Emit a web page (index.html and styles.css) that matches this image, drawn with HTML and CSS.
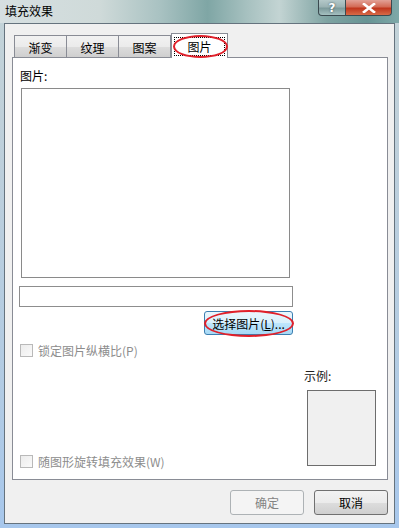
FILE: index.html
```html
<!DOCTYPE html>
<html lang="zh">
<head>
<meta charset="utf-8">
<title>填充效果</title>
<link rel="stylesheet" href="styles.css">
</head>
<body>
<div class="window">
  <div class="titlebar">
    <span class="title">填充效果</span>
    <div class="caption-btns">
      <span class="cap-btn help">?</span>
      <span class="cap-btn close">
        <svg width="14" height="10" viewBox="0 0 14 10"><path d="M2 1 L12 9 M12 1 L2 9" stroke="#fff" stroke-width="2.6" stroke-linecap="square"/></svg>
      </span>
    </div>
  </div>
  <div class="client">
    <div class="tabs">
      <div class="tab">渐变</div>
      <div class="tab">纹理</div>
      <div class="tab">图案</div>
      <div class="tab active"><span class="focus">图片</span><span class="ring ring-tab"></span></div>
    </div>
    <div class="panel">
      <div class="label">图片:</div>
      <div class="picture"></div>
      <div class="textbox"></div>
      <div class="btn-row">
        <div class="btn hot">选择图片(<u>L</u>)...<span class="ring ring-btn"></span></div>
      </div>
      <div class="lower">
        <div class="checks">
          <div class="check"><span class="box"></span>锁定图片纵横比(P)</div>
          <div class="check"><span class="box"></span>随图形旋转填充效果(W)</div>
        </div>
        <div class="sample">
          <div class="sample-label">示例:</div>
          <div class="sample-box"></div>
        </div>
      </div>
    </div>
    <div class="footer">
      <div class="btn dlg disabled">确定</div>
      <div class="btn dlg">取消</div>
    </div>
  </div>
</div>
</body>
</html>
```

FILE: styles.css
```css
* { box-sizing: border-box; }
html, body { margin: 0; padding: 0; }
body {
  width: 399px;
  height: 528px;
  overflow: hidden;
  font-family: "Noto Sans CJK SC", "Noto Sans", sans-serif;
  font-size: 12px;
  color: #000;
}
.window {
  width: 399px;
  height: 528px;
  display: flex;
  flex-direction: column;
  background: linear-gradient(180deg, #c3d3d8 0px, #bfd0da 120px, #b1cbe4 400px, #a7c7ec 528px);
}
.titlebar {
  height: 23px;
  display: flex;
  justify-content: space-between;
  align-items: flex-start;
  background: linear-gradient(90deg, #d6dfe1 0%, #cfdad9 25%, #a9c2c2 40%, #7fa6a5 52%, #a7c1c0 62%, #c3d4d3 70%, #7ea3a2 82%, #679494 92%, #7ea8a8 100%);
}
.title {
  padding: 3px 0 0 5px;
  line-height: 15px;
  color: #000;
}
.caption-btns {
  display: flex;
  margin-right: 7px;
}
.cap-btn {
  height: 16px;
  display: flex;
  align-items: center;
  justify-content: center;
  border: 1px solid #3b4a50;
  border-top: none;
  color: #fff;
  font-family: "DejaVu Sans", sans-serif;
  font-weight: bold;
  font-size: 12px;
}
.help {
  width: 28px;
  border-radius: 0 0 0 4px;
  background: linear-gradient(180deg, #b4c8c9 0%, #9bb3b4 45%, #7c9a9b 55%, #a5c0c0 100%);
  text-shadow: 0 0 2px #2c3e44;
}
.close {
  width: 46px;
  border-left: none;
  border-radius: 0 0 4px 0;
  background: linear-gradient(180deg, #e2a196 0%, #d36b56 45%, #c0361d 55%, #d76b48 100%);
}
.client {
  flex: 1;
  margin: 0 4px 4px 4px;
  border: 1px solid #65737e;
  background: #f0f0f0;
  display: flex;
  flex-direction: column;
  padding: 0 6px 0 7px;
}
.tabs {
  margin-top: 9px;
  height: 24px;
  display: flex;
  align-items: flex-end;
  padding-left: 2px;
  position: relative;
  z-index: 2;
}
.tab {
  width: 53px;
  height: 22px;
  margin-right: -1px;
  border: 1px solid #898c95;
  border-bottom: none;
  background: linear-gradient(180deg, #f2f2f2 0%, #ebebeb 50%, #dddddd 51%, #cfcfcf 100%);
  display: flex;
  align-items: center;
  justify-content: center;
  padding-top: 1px;
  color: #000;
}
.tab.active {
  width: 57px;
  height: 25px;
  margin-left: 1px;
  margin-bottom: -1px;
  background: #fff;
  position: relative;
  padding-top: 0;
}
.focus {
  outline: 1px dotted #000;
  padding: 2px 12px 1px 12px;
  line-height: 14px;
}
.ring {
  position: absolute;
  border: 2px solid #e0202a;
  border-radius: 50%;
  pointer-events: none;
}
.ring-tab {
  left: 1px;
  top: 1px;
  width: 55px;
  height: 23px;
}
.panel {
  height: 423px;
  border: 1px solid #898c95;
  background: #fff;
  padding: 11px 0 0 6px;
  display: flex;
  flex-direction: column;
}
.label {
  line-height: 14px;
  height: 14px;
  padding-left: 1px;
}
.picture {
  margin: 5px 0 0 2px;
  width: 269px;
  height: 190px;
  border: 1px solid #8a8a8a;
  background: #fff;
}
.textbox {
  margin-top: 8px;
  width: 274px;
  height: 21px;
  border: 1px solid #8d8d8d;
  background: #fff;
}
.btn-row {
  margin-top: 4px;
  padding-left: 185px;
  display: flex;
}
.btn {
  position: relative;
  display: flex;
  align-items: center;
  justify-content: center;
  border: 1px solid #707070;
  border-radius: 3px;
  background: linear-gradient(180deg, #f2f2f2 0%, #ebebeb 50%, #dddddd 51%, #cfcfcf 100%);
  color: #000;
}
.btn.hot {
  width: 89px;
  height: 24px;
  border-color: #3c7fb1;
  background: linear-gradient(180deg, #eaf6fd 0%, #d9f0fc 50%, #bee6fd 51%, #a7d9f5 100%);
}
.btn u { text-decoration: underline; }
.ring-btn {
  left: -1px;
  top: -2px;
  width: 90px;
  height: 27px;
}
.lower {
  margin-top: 9px;
  display: flex;
  justify-content: space-between;
  padding-right: 11px;
}
.checks {
  display: flex;
  flex-direction: column;
  justify-content: space-between;
  height: 124px;
  padding-left: 1px;
}
.check {
  display: flex;
  align-items: center;
  gap: 5px;
  height: 13px;
  color: #8d8d8d;
  line-height: 13px;
}
.box {
  width: 13px;
  height: 13px;
  border: 1px solid #b9b9b9;
  background: linear-gradient(135deg, #ececec, #fafafa);
}
.sample {
  padding-top: 25px;
  display: flex;
  flex-direction: column;
}
.sample-label {
  line-height: 14px;
  color: #222;
}
.sample-box {
  margin: 7px 0 0 3px;
  width: 69px;
  height: 76px;
  border: 1px solid #6d6d6d;
  background: #f0f0f0;
}
.footer {
  margin-top: 10px;
  display: flex;
  justify-content: flex-end;
  gap: 10px;
}
.btn.dlg {
  width: 74px;
  height: 25px;
}
.btn.disabled {
  border-color: #adb2b5;
  background: #f4f4f4;
  color: #838383;
}
```
